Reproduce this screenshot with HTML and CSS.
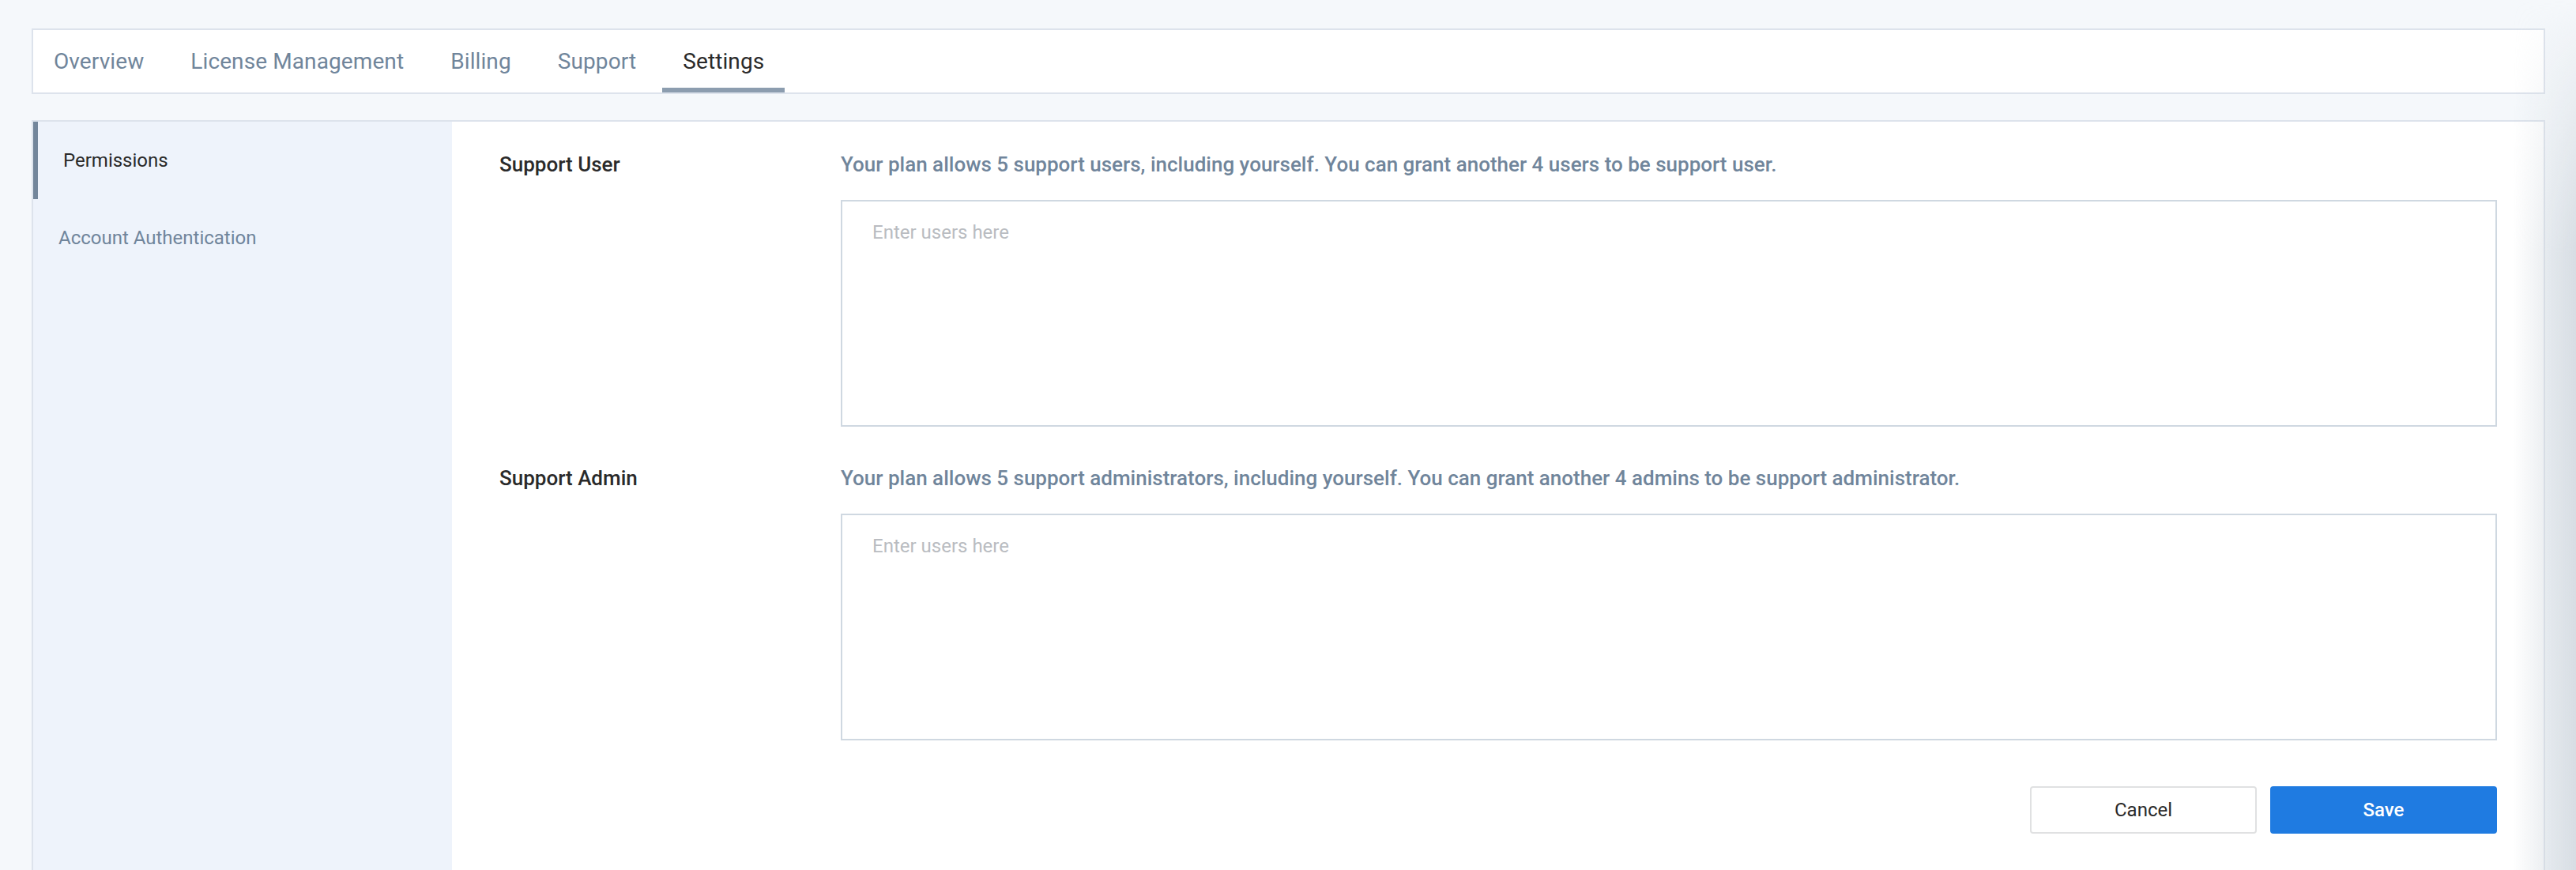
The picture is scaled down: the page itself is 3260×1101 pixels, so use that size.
FILE: index.html
```html
<!DOCTYPE html>
<html>
<head>
  <meta charset="UTF-8">
  <title>Settings - Permissions</title>
  <link rel="stylesheet" href="styles.css">
</head>
<body>
  <div class="page">
    <div class="tabs">
      <a class="tab" href="#">Overview</a>
      <a class="tab" href="#">License Management</a>
      <a class="tab" href="#">Billing</a>
      <a class="tab" href="#">Support</a>
      <a class="tab active" href="#">Settings</a>
    </div>

    <div class="panel">
      <div class="sidebar">
        <a class="side-item active" href="#">Permissions</a>
        <a class="side-item" href="#">Account Authentication</a>
      </div>

      <form class="content" action="#" method="POST">
        <div class="section">
          <label class="section-label" for="support-user">Support User</label>
          <p class="section-hint">Your plan allows 5 support users, including yourself. You can grant another 4 users to be support user.</p>
          <textarea id="support-user" class="users-input" placeholder="Enter users here"></textarea>
        </div>

        <div class="section">
          <label class="section-label" for="support-admin">Support Admin</label>
          <p class="section-hint">Your plan allows 5 support administrators, including yourself. You can grant another 4 admins to be support administrator.</p>
          <textarea id="support-admin" class="users-input" placeholder="Enter users here"></textarea>
        </div>

        <div class="actions">
          <button type="button" class="btn btn-cancel">Cancel</button>
          <button type="submit" class="btn btn-save">Save</button>
        </div>
      </form>
    </div>
  </div>

  <div class="edge-shadow"></div>
</body>
</html>
```

FILE: styles.css
```css
/* base */
body {
  margin: 0;
  font-family: Roboto, "Liberation Sans", Arial, sans-serif;
  background-color: #f5f8fb;
  color: #2a2a2a;
}

.page {
  padding: 36px 39px 0 40px;
}

/* top tabs */
.tabs {
  display: flex;
  gap: 7px;
  height: 79px;
  background-color: #fff;
  border: 2px solid #dde3ec;
}

.tab {
  display: flex;
  align-items: center;
  padding: 6px 26px 0;
  font-size: 28px;
  letter-spacing: 0.1px;
  color: #70859b;
  text-decoration: none;
  border-bottom: 6px solid transparent;
}

.tab.active {
  color: #2a2a2a;
  border-bottom-color: #8c9daf;
}

/* main panel */
.panel {
  display: flex;
  margin-top: 33px;
  min-height: 1000px;
  background-color: #fff;
  border: 2px solid #dde3ec;
}

.sidebar {
  width: 530px;
  flex-shrink: 0;
  background-color: #eef3fb;
}

.side-item {
  display: flex;
  align-items: center;
  height: 98px;
  padding-left: 32px;
  font-size: 24px;
  color: #70859b;
  text-decoration: none;
}

.side-item.active {
  border-left: 6px solid #73869b;
  color: #2a2a2a;
}

.content {
  flex: 1;
  padding: 36px 59px 0 60px;
}

.section {
  display: grid;
  grid-template-columns: 432px 1fr;
  margin-bottom: 47px;
}

.section-label {
  font-size: 26px;
  line-height: 36px;
  font-weight: 500;
  color: #2a2a2a;
}

.section-hint {
  margin: 0 0 27px;
  font-size: 26px;
  line-height: 36px;
  font-weight: 500;
  color: #70859b;
}

.users-input {
  grid-column: 2;
  display: block;
  box-sizing: border-box;
  width: 100%;
  height: 287px;
  padding: 25px 38px;
  border: 2px solid #cfd8e1;
  border-radius: 0;
  font-family: inherit;
  font-size: 24px;
  color: #2a2a2a;
  resize: none;
  outline: none;
}

.users-input::placeholder {
  color: #b9bcc1;
}

/* buttons */
.actions {
  display: flex;
  justify-content: flex-end;
  gap: 17px;
  margin-top: 58px; /* collapses with the section's bottom margin */
}

.btn {
  width: 287px;
  height: 60px;
  border-radius: 4px;
  font-family: inherit;
  font-size: 24px;
  cursor: pointer;
}

.btn-cancel {
  background-color: #fff;
  border: 2px solid #e0e1e2;
  color: #2a2a2a;
}

.btn-save {
  background-color: #1f7be1;
  border: none;
  color: #fff;
  font-weight: 500;
}

.edge-shadow {
  position: fixed;
  top: 0;
  right: 0;
  bottom: 0;
  width: 80px;
  pointer-events: none;
  background: linear-gradient(to right, rgba(205, 212, 219, 0), rgba(205, 212, 219, 0.75));
  -webkit-mask-image: linear-gradient(to bottom, transparent 0, #000 320px);
  mask-image: linear-gradient(to bottom, transparent 0, #000 320px);
}
```
